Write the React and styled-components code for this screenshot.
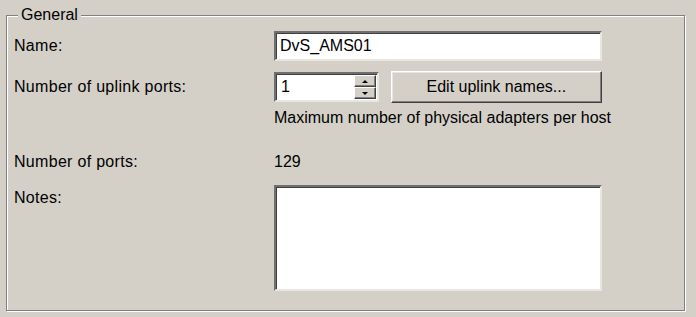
import React from 'react';
import styled, { createGlobalStyle } from 'styled-components';

const Global = createGlobalStyle`
  html, body {
    margin: 0;
    padding: 0;
    background: #d4d0c8;
  }
  body {
    font-family: "Liberation Sans", Arial, sans-serif;
    font-size: 16px;
    color: #000;
  }
`;

const Page = styled.div`
  width: 696px;
  height: 317px;
  padding: 15px 0 0 6px;
  box-sizing: border-box;
  overflow: hidden;
`;

const Group = styled.div`
  position: relative;
  width: 679px;
  height: 296px;
  border: 1px solid #808080;
  box-shadow: inset 1px 1px 0 #fff, 1px 1px 0 #fff;
  padding: 15px 0 0 7px;
  box-sizing: border-box;
`;

const Legend = styled.span`
  position: absolute;
  top: -10px;
  left: 11px;
  padding: 0 3px;
  background: #d4d0c8;
  line-height: 18px;
`;

const Form = styled.div`
  display: grid;
  grid-template-columns: 260px 328px;
  white-space: nowrap;
`;

const Label = styled.div`
  display: flex;
  align-items: ${(p) => (p.$top ? 'flex-start' : 'center')};
  padding-top: ${(p) => (p.$top ? '4px' : '0')};
  margin-top: ${(p) => p.$mt || 0}px;
  height: ${(p) => p.$h}px;
  letter-spacing: 0.3px;
`;

const Cell = styled.div`
  display: flex;
  align-items: center;
  gap: 12px;
  margin-top: ${(p) => p.$mt || 0}px;
  height: ${(p) => p.$h}px;
`;

const Sunken = styled.div`
  box-sizing: border-box;
  background: #fff;
  border-style: solid;
  border-width: 2px;
  border-color: #6f6f6f #e8e6e1 #e8e6e1 #6f6f6f;
  box-shadow: inset 1px 1px 0 #404040;
`;

const TextBox = styled(Sunken)`
  width: 328px;
  height: 30px;
  display: flex;
  align-items: center;
  padding-left: 4px;
`;

const Spin = styled(Sunken)`
  width: 105px;
  height: 30px;
  display: flex;
  align-items: center;
  justify-content: space-between;
  padding: 1px 1px 1px 5px;
`;

const SpinButtons = styled.div`
  display: flex;
  flex-direction: column;
  height: 100%;
`;

const SpinButton = styled.div`
  flex: 1;
  width: 22px;
  box-sizing: border-box;
  background: #d4d0c8;
  border-style: solid;
  border-width: 1px;
  border-color: #fff #404040 #404040 #fff;
  box-shadow: inset -1px -1px 0 #808080;
  display: flex;
  align-items: center;
  justify-content: center;
`;

const Arrow = styled.span`
  width: 0;
  height: 0;
  border-left: 3px solid transparent;
  border-right: 3px solid transparent;
  ${(p) => (p.$up ? 'border-bottom: 3px solid #000;' : 'border-top: 3px solid #000;')}
`;

const Button = styled.div`
  width: 212px;
  height: 32px;
  box-sizing: border-box;
  background: #d4d0c8;
  border-style: solid;
  border-width: 1px;
  border-color: #fff #404040 #404040 #fff;
  box-shadow: inset -1px -1px 0 #808080, inset 1px 1px 0 #e8e6e1;
  display: flex;
  align-items: center;
  justify-content: center;
  padding-bottom: 1px;
`;

const Notes = styled(Sunken)`
  width: 328px;
  height: 106px;
`;

export default function App() {
  return (
    <Page>
      <Global />
      <Group>
        <Legend>General</Legend>
        <Form>
          <Label $h={30}>Name:</Label>
          <Cell $h={30}>
            <TextBox>DvS_AMS01</TextBox>
          </Cell>

          <Label $h={32} $mt={10}>Number of uplink ports:</Label>
          <Cell $h={32} $mt={10}>
            <Spin>
              <span>1</span>
              <SpinButtons>
                <SpinButton><Arrow $up /></SpinButton>
                <SpinButton><Arrow /></SpinButton>
              </SpinButtons>
            </Spin>
            <Button>Edit uplink names...</Button>
          </Cell>

          <Label $h={20} $mt={5} />
          <Cell $h={20} $mt={5}>Maximum number of physical adapters per host</Cell>

          <Label $h={20} $mt={24}>Number of ports:</Label>
          <Cell $h={20} $mt={24}>129</Cell>

          <Label $h={106} $mt={13} $top>Notes:</Label>
          <Cell $h={106} $mt={13}>
            <Notes />
          </Cell>
        </Form>
      </Group>
    </Page>
  );
}
